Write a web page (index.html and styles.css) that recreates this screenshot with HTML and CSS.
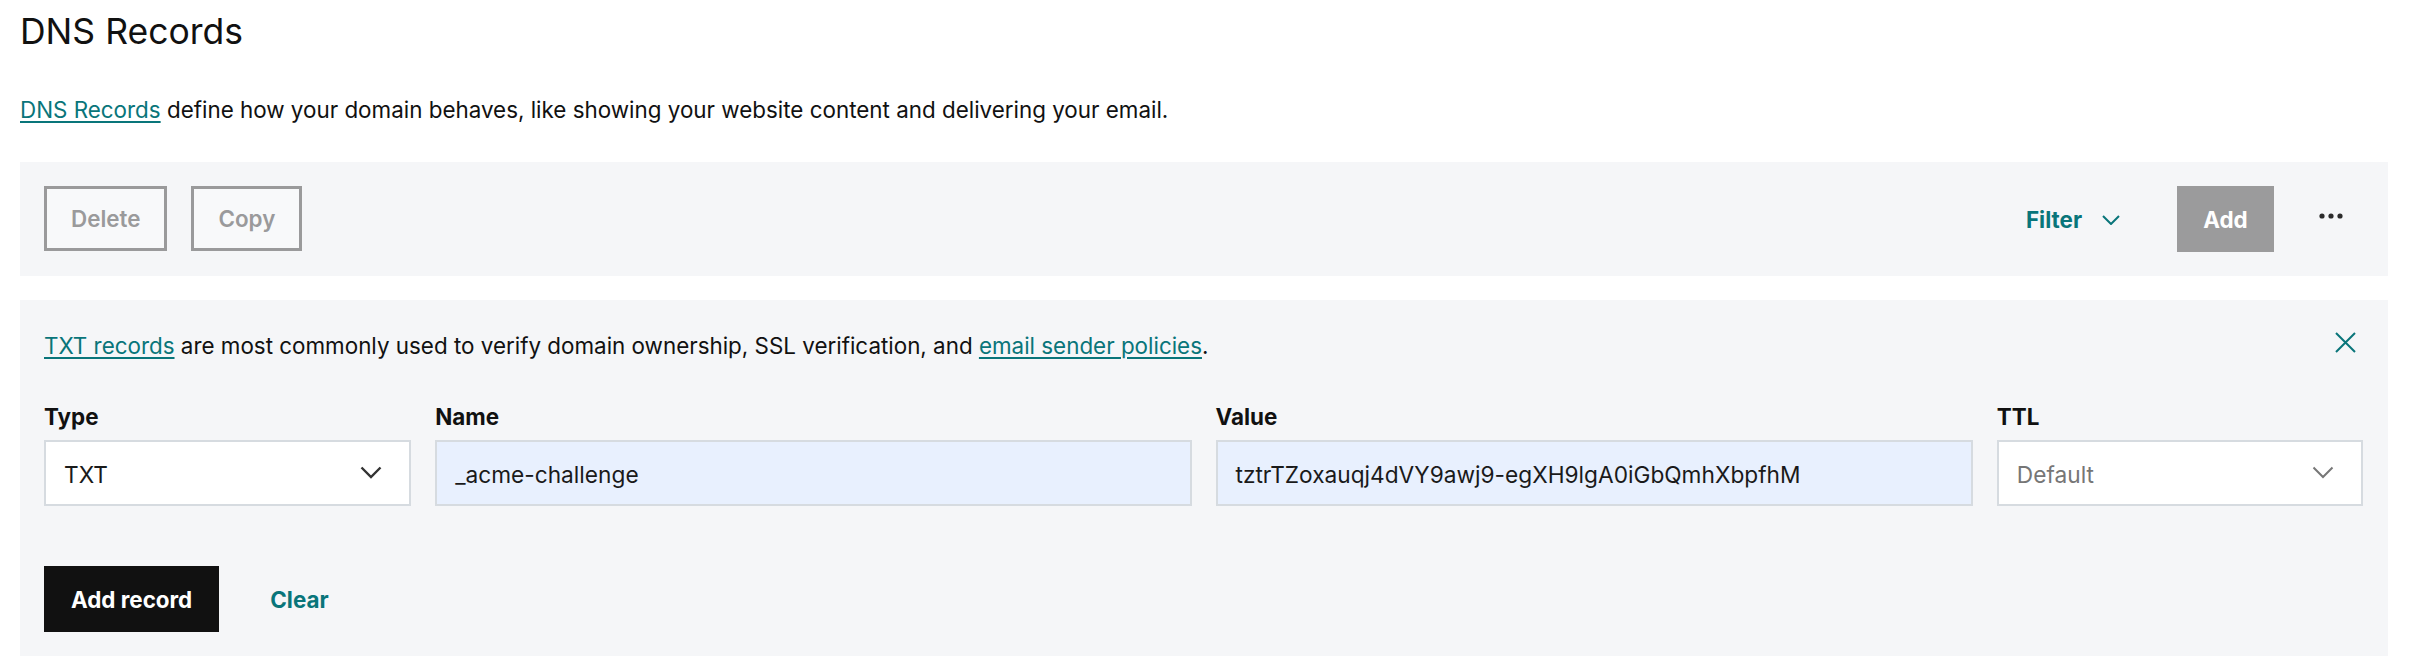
FILE: index.html
```html
<!DOCTYPE html>
<html lang="en">
<head>
<meta charset="utf-8">
<title>DNS Records</title>
<link rel="stylesheet" href="styles.css">
</head>
<body>
<div class="page">
  <h1 class="title">DNS Records</h1>
  <p class="intro"><a class="link" href="#">DNS Records</a> define how your domain behaves, like showing your website content and delivering your email.</p>

  <div class="toolbar">
    <div class="toolbar-left">
      <button class="btn-outline">Delete</button>
      <button class="btn-outline">Copy</button>
    </div>
    <div class="toolbar-right">
      <button class="filter">Filter
        <svg class="filter-chev" width="18" height="10" viewBox="0 0 18 10"><path d="M1 1l8 8 8-8" fill="none" stroke="currentColor" stroke-width="2"/></svg>
      </button>
      <button class="btn-add">Add</button>
      <button class="more" aria-label="More">
        <svg width="24" height="6" viewBox="0 0 24 6"><circle cx="3" cy="3" r="2.6" fill="#2b2b2b"/><circle cx="12" cy="3" r="2.6" fill="#2b2b2b"/><circle cx="21" cy="3" r="2.6" fill="#2b2b2b"/></svg>
      </button>
    </div>
  </div>

  <div class="panel">
    <div class="info-row">
      <p class="info"><a class="link" href="#">TXT records</a> are most commonly used to verify domain ownership, SSL verification, and <a class="link" href="#">email sender policies</a>.</p>
      <button class="close" aria-label="Close">
        <svg width="21" height="21" viewBox="0 0 21 21"><path d="M1 1l19 19M20 1L1 20" fill="none" stroke="currentColor" stroke-width="2"/></svg>
      </button>
    </div>

    <div class="fields">
      <div class="field">
        <label class="label">Type</label>
        <div class="input select">
          <span>TXT</span>
          <svg class="chev" width="22" height="13" viewBox="0 0 22 13"><path d="M1.5 1.5l9.5 9.5 9.5-9.5" fill="none" stroke="currentColor" stroke-width="2.4"/></svg>
        </div>
      </div>
      <div class="field">
        <label class="label">Name</label>
        <div class="input filled"><span>_acme-challenge</span></div>
      </div>
      <div class="field">
        <label class="label">Value</label>
        <div class="input filled"><span>tztrTZoxauqj4dVY9awj9-egXH9lgA0iGbQmhXbpfhM</span></div>
      </div>
      <div class="field">
        <label class="label">TTL</label>
        <div class="input select placeholder">
          <span>Default</span>
          <svg class="chev" width="22" height="13" viewBox="0 0 22 13"><path d="M1.5 1.5l9.5 9.5 9.5-9.5" fill="none" stroke="currentColor" stroke-width="2"/></svg>
        </div>
      </div>
    </div>

    <div class="actions">
      <button class="btn-primary">Add record</button>
      <button class="btn-text">Clear</button>
    </div>
  </div>
</div>
</body>
</html>
```
FILE: styles.css
```css
html, body {
  margin: 0;
  padding: 0;
  background: #ffffff;
}

body {
  font-family: Inter, "Open Sans", "Liberation Sans", sans-serif;
  color: #111111;
}

.page {
  padding: 0 22px 0 20px;
}

button {
  font-family: inherit;
  cursor: pointer;
}

.title {
  margin: 0;
  padding-top: 10px;
  font-size: 35.5px;
  line-height: 44px;
  font-weight: 400;
  color: #111;
}

.intro {
  margin: 41px 0 0 0;
  font-size: 22.4px;
  line-height: 30px;
  color: #111;
}

.link {
  color: #09757a;
  text-decoration: underline;
  text-decoration-thickness: 2px;
  text-underline-offset: 3px;
}

.toolbar {
  margin-top: 37px;
  background: #f5f6f8;
  height: 114px;
  box-sizing: border-box;
  padding: 24px 45px 0 24px;
  display: flex;
  justify-content: space-between;
  align-items: flex-start;
}

.toolbar-left {
  display: flex;
  gap: 24px;
}

.btn-outline {
  height: 65px;
  box-sizing: border-box;
  border: 3px solid #9a9a9b;
  background: #f8f9fa;
  color: #9a9a9b;
  font-size: 22.4px;
  font-weight: 600;
  padding: 0 24px;
}

.toolbar-right {
  display: flex;
  align-items: center;
  height: 66px;
}

.filter {
  border: 0;
  background: transparent;
  color: #09757a;
  font-size: 22.4px;
  font-weight: 700;
  display: flex;
  align-items: center;
  gap: 20px;
  padding: 0;
}

.filter-chev {
  margin-top: 2px;
}

.btn-add {
  margin-left: 57px;
  width: 97px;
  height: 66px;
  border: 0;
  background: #9b9b9c;
  color: #fff;
  font-size: 22.4px;
  font-weight: 700;
}

.more {
  margin-left: 45px;
  border: 0;
  background: transparent;
  padding: 0;
  display: flex;
  align-items: center;
  margin-top: -6px;
}

.panel {
  margin-top: 24px;
  background: #f5f6f8;
  box-sizing: border-box;
  padding: 31px 25px 24px 24px;
}

.info-row {
  display: flex;
  justify-content: space-between;
  align-items: flex-start;
}

.info {
  margin: 0;
  font-size: 22.4px;
  line-height: 30px;
  color: #111;
}

.close {
  border: 0;
  background: transparent;
  color: #09757a;
  padding: 0;
  margin: 1px 7px 0 0;
  display: flex;
}

.fields {
  margin-top: 41px;
  display: grid;
  grid-template-columns: 367fr 756fr 757fr 366fr;
  column-gap: 24px;
}

.field {
  display: flex;
  flex-direction: column;
}

.label {
  font-size: 22.4px;
  line-height: 30px;
  font-weight: 700;
  color: #111;
  margin-bottom: 8px;
}

.input {
  height: 66px;
  box-sizing: border-box;
  border: 2px solid #d6dbe0;
  background: #ffffff;
  padding: 2px 18px 0 18px;
  display: flex;
  align-items: center;
  justify-content: space-between;
  font-size: 22.7px;
  color: #1a1a1a;
  white-space: nowrap;
  overflow: hidden;
}

.input.filled {
  background: #e8f0fe;
}

.select .chev {
  color: #333;
  margin-right: 9px;
  margin-top: -3px;
}

.placeholder {
  color: #767676;
}

.placeholder .chev {
  color: #777;
}

.actions {
  margin-top: 60px;
  display: flex;
  align-items: center;
  gap: 51px;
}

.btn-primary {
  height: 66px;
  padding: 0 27px;
  border: 0;
  background: #111111;
  color: #fff;
  font-size: 22.4px;
  font-weight: 700;
}

.btn-text {
  border: 0;
  background: transparent;
  color: #09757a;
  font-size: 22.4px;
  font-weight: 700;
  padding: 0;
}
```
